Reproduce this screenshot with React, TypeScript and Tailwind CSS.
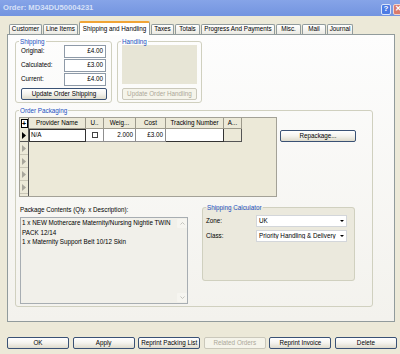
import type { ReactNode } from 'react';

function XpButton({ children, disabled, className = '' }: { children: ReactNode; disabled?: boolean; className?: string }) {
  return (
    <button
      type="button"
      className={`flex h-[12px] shrink-0 items-center justify-center whitespace-nowrap rounded-[2px] border leading-none ${
        disabled
          ? 'border-[#cac8bb] bg-[#f5f4ea] text-[#aca899]'
          : 'border-[#3a5275] bg-gradient-to-b from-white via-[#f4f3ee] to-[#dedbcc] text-black'
      } ${className}`}
    >
      {children}
    </button>
  );
}

function GroupBox({ title, className = '', titleClass = 'text-[#2150c0]', children }: { title: string; className?: string; titleClass?: string; children: ReactNode }) {
  return (
    <fieldset className={`shrink-0 rounded-[3px] border border-[#d0d0bf] ${className}`}>
      <legend className={`ml-[3px] px-[1px] leading-[7px] ${titleClass}`}>{title}</legend>
      {children}
    </fieldset>
  );
}

function Arrow({ color = '#000' }: { color?: string }) {
  return (
    <svg width="4" height="7" viewBox="0 0 4 7">
      <polygon points="0,0 4,3.5 0,7" fill={color} />
    </svg>
  );
}

function Combo({ value }: { value: string }) {
  return (
    <div className="flex h-[12px] w-[91px] items-center border border-[#d3d6da] bg-white">
      <span className="flex-1 overflow-hidden whitespace-nowrap pl-[2px] leading-none">{value}</span>
      <span className="flex w-[9px] items-center justify-center">
        <svg width="4" height="2" viewBox="0 0 4 2">
          <polygon points="0,0 4,0 2,2" fill="#000" />
        </svg>
      </span>
    </div>
  );
}

const tabs = [
  { label: 'Customer', w: 'w-[33px]' },
  { label: 'Line Items', w: 'w-[35px]' },
  { label: 'Shipping and Handling', w: 'w-[71px]', active: true },
  { label: 'Taxes', w: 'w-[23px]' },
  { label: 'Totals', w: 'w-[25px]' },
  { label: 'Progress And Payments', w: 'w-[74px]' },
  { label: 'Misc.', w: 'w-[25px]' },
  { label: 'Mail', w: 'w-[24px]' },
  { label: 'Journal', w: 'w-[26px]' },
];

const columns = [
  { label: 'Provider Name', w: 'w-[57px]' },
  { label: 'U..', w: 'w-[18px]' },
  { label: 'Weig...', w: 'w-[32px]' },
  { label: 'Cost', w: 'w-[30px]' },
  { label: 'Tracking Number', w: 'w-[58px]' },
  { label: 'A...', w: 'w-[18px]' },
];

export default function App() {
  return (
    <div className="relative h-[354px] w-[400px] overflow-hidden bg-[#ece9d8] font-['Liberation_Sans',Arial,sans-serif] text-[6.3px] text-black">
      {/* title bar */}
      <div className="flex h-[16px] items-center justify-between bg-gradient-to-b from-[#86a4e8] to-[#7394e0] pl-[3px]">
        <span className="text-[7.6px] font-bold leading-none text-[#d6e0f7]">Order: MD34DU50004231</span>
        <div className="-mr-[3px] flex items-center gap-[2px] pt-[2px]">
          <span className="flex h-[11px] w-[10px] items-center justify-center rounded-[2px] border border-[#dbe5fa] bg-[#4d7be4] text-[8px] font-bold leading-none text-white">?</span>
          <span className="flex h-[11px] w-[10px] items-center justify-center rounded-[2px] border border-[#f1d5d0] bg-[#d97a6c] text-[8px] font-bold leading-none text-white">✕</span>
        </div>
      </div>

      {/* tabs */}
      <div className="mt-[5px] flex h-[13px] items-end gap-[1px] pl-[9px]">
        {tabs.map((t) =>
          t.active ? (
            <div
              key={t.label}
              className={`relative z-10 -mb-[1px] flex h-[14px] ${t.w} items-center justify-center rounded-t-[2px] border border-b-0 border-[#919b9c] border-t-[2px] border-t-[#f0a436] bg-white leading-none`}
            >
              {t.label}
            </div>
          ) : (
            <div
              key={t.label}
              className={`flex h-[10px] ${t.w} items-center justify-center rounded-t-[2px] border border-b-0 border-[#919b9c] bg-gradient-to-b from-white to-[#ebeae3] leading-none`}
            >
              {t.label}
            </div>
          ),
        )}
      </div>

      {/* tab panel */}
      <div className="ml-[7px] h-[288px] w-[388px] border border-[#919b9c] bg-gradient-to-b from-[#fdfdfd] to-[#f3f2ed] pl-[7px] pt-[3px]">
        <div className="flex gap-[5px]">
          <GroupBox title="Shipping" className="w-[97px]">
            <div className="pb-[2px] pl-[5px] pr-[4px]">
              <div className="flex flex-col gap-[1px]">
                {[
                  ['Original:', '£4.00'],
                  ['Calculated:', '£3.00'],
                  ['Current:', '£4.00'],
                ].map(([label, value]) => (
                  <div key={label} className="flex h-[13px] items-center">
                    <span className="w-[43px] leading-none">{label}</span>
                    <span className="flex h-[13px] w-[42px] items-center justify-end border border-[#8e9aa8] bg-white pr-[2px] leading-none">{value}</span>
                  </div>
                ))}
              </div>
              <XpButton className="mt-[2px] w-[86px]">Update Order Shipping</XpButton>
            </div>
          </GroupBox>

          <GroupBox title="Handling" className="w-[85px]">
            <div className="px-[4px] pb-[2px]">
              <div className="h-[39px] w-[75px] bg-[#e7e5d6]" />
              <XpButton disabled className="mt-[4px] w-[75px]">Update Order Handling</XpButton>
            </div>
          </GroupBox>
        </div>

        <GroupBox title="Order Packaging" className="mt-[4px] w-[358px]">
          <div className="pb-[2px] pl-[3px] pt-[3px]">
            <div className="flex items-start">
              {/* grid */}
              <div className="flex h-[80px] w-[258px] flex-col overflow-hidden border border-[#a3a197] bg-[#ece9d8]">
                <div className="flex h-[11px] shrink-0">
                  <div className="flex w-[9px] items-center justify-center border-r border-[#555]">
                    <span className="flex h-[9px] w-[7px] items-center justify-center border border-black bg-white text-[7px] font-bold leading-none">+</span>
                  </div>
                  {columns.map((c) => (
                    <div key={c.label} className={`flex ${c.w} items-center justify-center overflow-hidden whitespace-nowrap border-b border-r border-[#9d9a8c] leading-none`}>
                      {c.label}
                    </div>
                  ))}
                </div>
                <div className="flex h-[13px] shrink-0">
                  <div className="flex w-[9px] items-center justify-center border-b border-r border-[#555]">
                    <Arrow />
                  </div>
                  <div className="flex w-[57px] items-center border border-[#333] bg-white pl-[1px] leading-none">N/A</div>
                  <div className="flex w-[18px] items-center justify-center border-b border-r border-[#8f8f8f] bg-white">
                    <span className="h-[6px] w-[6px] border border-[#444] bg-white" />
                  </div>
                  <div className="flex w-[32px] items-center justify-end border-b border-r border-[#8f8f8f] bg-white pr-[2px] leading-none">2.000</div>
                  <div className="flex w-[30px] items-center justify-end border-b border-r border-[#8f8f8f] bg-white pr-[2px] leading-none">£3.00</div>
                  <div className="w-[58px] border-b border-r border-[#333] bg-white" />
                  <div className="w-[18px] border-b border-r border-[#555]" />
                </div>
                <div className="flex flex-1">
                  <div className="flex w-[9px] flex-col border-r border-[#555]">
                    {[0, 1, 2, 3].map((i) => (
                      <div key={i} className="flex h-[13px] items-center justify-center border-b border-[#c9c6b6]">
                        <Arrow color="#a8a69c" />
                      </div>
                    ))}
                  </div>
                </div>
              </div>
              <XpButton className="ml-[3px] mt-[13px] w-[76px]">Repackage...</XpButton>
            </div>

            <div className="mt-[7px] flex items-start">
              <div className="pl-[1px]">
                <div className="mt-[2px] h-[8px] leading-[8px]">Package Contents (Qty. x Description):</div>
                <div className="mt-[3px] flex h-[87px] w-[168px] border border-[#a7adb2] bg-[#f1f0ea]">
                  <div className="flex-1 whitespace-nowrap pl-[1px] leading-[9.5px]">
                    <div>1 x NEW Mothercare Maternity/Nursing Nightie TWIN</div>
                    <div>PACK 12/14</div>
                    <div>1 x Maternity Support Belt 10/12 Skin</div>
                  </div>
                  <div className="flex w-[10px] flex-col justify-between py-[1px]">
                    <div className="flex h-[9px] items-center justify-center rounded-[1px] bg-[#f6f5f0]">
                      <svg width="5" height="3" viewBox="0 0 5 3">
                        <polyline points="0.5,2.5 2.5,0.5 4.5,2.5" fill="none" stroke="#c3c3bd" strokeWidth="1" />
                      </svg>
                    </div>
                    <div className="flex h-[9px] items-center justify-center rounded-[1px] bg-[#f6f5f0]">
                      <svg width="5" height="3" viewBox="0 0 5 3">
                        <polyline points="0.5,0.5 2.5,2.5 4.5,0.5" fill="none" stroke="#c3c3bd" strokeWidth="1" />
                      </svg>
                    </div>
                  </div>
                </div>
              </div>

              <GroupBox title="Shipping Calculator" className="ml-[14px] w-[153px] bg-[#ebe9dd]">
                <div className="pb-[38px] pl-[3px] pt-[4px]">
                  <div className="flex h-[12px] items-center">
                    <span className="w-[50px] leading-none">Zone:</span>
                    <Combo value="UK" />
                  </div>
                  <div className="mt-[3px] flex h-[12px] items-center">
                    <span className="w-[50px] leading-none">Class:</span>
                    <Combo value="Priority Handling & Delivery (£" />
                  </div>
                </div>
              </GroupBox>
            </div>
          </div>
        </GroupBox>
      </div>

      {/* bottom buttons */}
      <div className="mt-[15px] flex gap-[3.6px] pl-[7px]">
        <XpButton className="w-[62px]">OK</XpButton>
        <XpButton className="w-[62px]">Apply</XpButton>
        <XpButton className="w-[62px]">Reprint Packing List</XpButton>
        <XpButton disabled className="w-[62px]">Related Orders</XpButton>
        <XpButton className="w-[62px]">Reprint Invoice</XpButton>
        <XpButton className="w-[62px]">Delete</XpButton>
      </div>
    </div>
  );
}
